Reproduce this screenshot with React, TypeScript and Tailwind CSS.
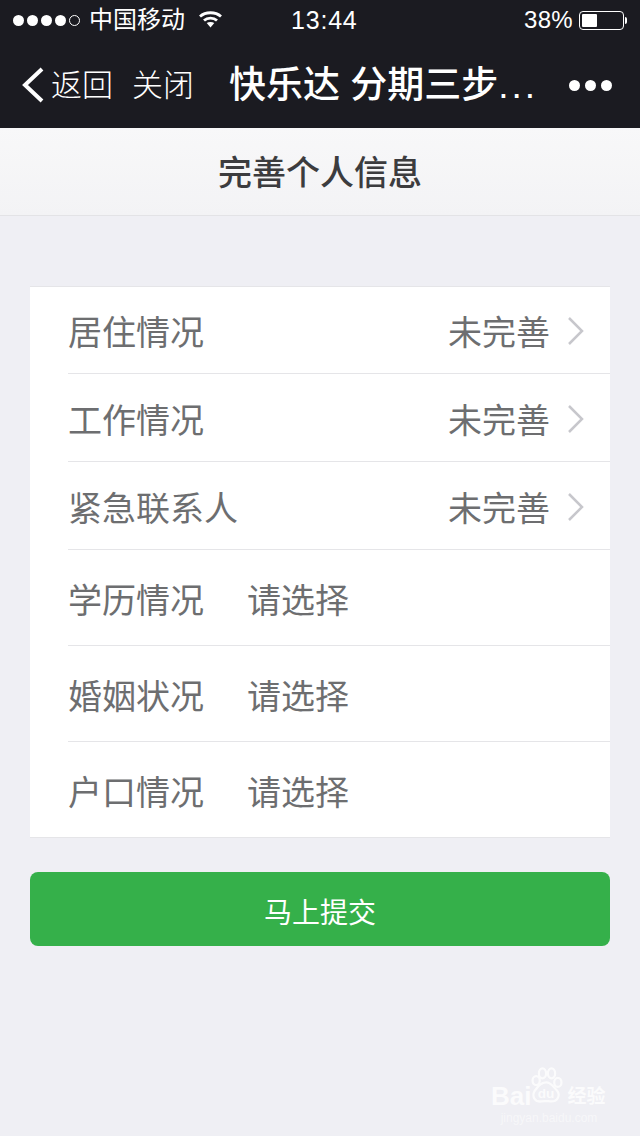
const font = { fontFamily: '"Liberation Sans", "Noto Sans CJK SC", sans-serif' };

const linkRows = ["居住情况", "工作情况", "紧急联系人"];
const selectRows = ["学历情况", "婚姻状况", "户口情况"];

function StatusBar() {
  return (
    <div className="flex h-10 items-center text-white">
      <div className="ml-[13px] flex w-[68px] items-center gap-[3px]">
        {[0, 1, 2, 3].map((i) => (
          <span key={i} className="h-[11px] w-[11px] shrink-0 rounded-full bg-white" />
        ))}
        <span className="h-[11px] w-[11px] shrink-0 rounded-full border border-white" />
      </div>
      <span className="ml-[8px] text-[24px] leading-none">中国移动</span>
      <svg className="ml-[13px] mb-[2px]" width="25" height="18" viewBox="0 0 24 18" fill="none" stroke="#fff" strokeWidth="2.8">
        <path d="M1.5 6.5C7 1.5 17 1.5 22.5 6.5" />
        <path d="M5.5 10.5C9 7.2 15 7.2 18.5 10.5" />
        <path d="M12 17.5l-3.8-4.4c2-1.5 5.6-1.5 7.6 0z" fill="#fff" stroke="none" />
      </svg>
      <span className="ml-[68px] w-[70px] text-[25px] font-medium leading-none tracking-[0.8px]">13:44</span>
      <span className="ml-auto text-[24px] leading-none tracking-[0.3px]">38%</span>
      <div className="ml-[6px] mr-[13px] flex items-center">
        <div className="h-[19px] w-[45px] rounded-[4px] border border-white p-[2px]">
          <div className="h-full w-[15px] rounded-[1px] bg-white" />
        </div>
        <div className="ml-[1px] h-[7px] w-[2px] rounded-r-[2px] bg-white" />
      </div>
    </div>
  );
}

function NavBar() {
  return (
    <div className="flex h-[88px] items-center pt-[2px] text-white">
      <svg className="ml-[21px]" width="24" height="36" viewBox="0 0 24 36" fill="none" stroke="#fff" strokeWidth="4">
        <path d="M21 2L4 18l17 16" />
      </svg>
      <span className="ml-[6px] text-[31px] font-light leading-none">返回</span>
      <span className="ml-[19px] text-[31px] font-light leading-none">关闭</span>
      <span className="ml-[35px] text-[37px] font-medium leading-none">
        快乐达 分期三步<span className="tracking-[3px]">...</span>
      </span>
      <div className="ml-auto mr-[28px] flex gap-[5px]">
        {[0, 1, 2].map((i) => (
          <span key={i} className="h-[11px] w-[11px] rounded-full bg-white" />
        ))}
      </div>
    </div>
  );
}

function Chevron() {
  return (
    <svg className="-mt-[4px] ml-[17px] mr-[25px]" width="18" height="30" viewBox="0 0 18 30" fill="none" stroke="#c7c7cc" strokeWidth="2.5">
      <path d="M2 2l13 13L2 28" />
    </svg>
  );
}

function BaiduMark() {
  return (
    <div className="absolute left-[491px] top-[1065px] w-[116px] whitespace-nowrap text-white opacity-75">
      <svg className="absolute left-[37px] top-[1px]" width="38" height="40" viewBox="0 0 42 42" fill="none" stroke="#fff" strokeWidth="2.5">
        <ellipse cx="9" cy="15" rx="4" ry="5" />
        <ellipse cx="16" cy="7" rx="4" ry="5.5" />
        <ellipse cx="26" cy="7" rx="4" ry="5.5" />
        <ellipse cx="33" cy="17" rx="4" ry="5" />
        <path d="M20 17c6 0 8 5 12 9 4 5 1 12-6 12-4 0-7-1-11 0-7 1-11-5-8-11 3-4 6-10 13-10z" />
        <text x="20" y="34" fontSize="15" fontWeight="700" fill="#fff" stroke="none" textAnchor="middle">du</text>
      </svg>
      <div className="mt-[19px] flex items-end leading-none">
        <span className="text-[26px] font-bold leading-[24px]">Bai</span>
        <span className="ml-[36px] text-[19px] font-bold leading-[22px]">经验</span>
      </div>
      <div className="mt-[4px] text-center text-[12px] leading-none opacity-70">jingyan.baidu.com</div>
    </div>
  );
}

export default function App() {
  return (
    <div className="relative h-[1136px] w-[640px] overflow-hidden bg-[#efeff4]" style={font}>
      <div className="bg-[#1b1b21]">
        <StatusBar />
        <NavBar />
      </div>

      <div className="flex h-[88px] items-center justify-center border-b border-[#e3e3e6] bg-gradient-to-b from-[#f8f8f9] to-[#f3f3f5] pt-[2px]">
        <h1 className="text-[34px] font-medium leading-none text-[#3c3c3e]">完善个人信息</h1>
      </div>

      <div className="mx-[30px] mt-[70px] border-y border-[#e5e5e8] bg-white">
        {linkRows.map((label, i) => (
          <div
            key={label}
            className={`ml-[38px] flex items-center border-b border-[#e5e5e8] pt-[6px] text-[34px] leading-none text-[#6d6e70] ${
              i === 0 ? "h-[87px]" : "h-[88px]"
            }`}
          >
            <span>{label}</span>
            <span className="ml-auto">未完善</span>
            <Chevron />
          </div>
        ))}
        {selectRows.map((label, i) => (
          <div
            key={label}
            className={`ml-[38px] flex items-center pt-[6px] text-[34px] leading-none text-[#6d6e70] ${
              i < selectRows.length - 1 ? "h-[96px] border-b border-[#e5e5e8]" : "h-[95px]"
            }`}
          >
            <span className="w-[179px]">{label}</span>
            <span>请选择</span>
          </div>
        ))}
      </div>

      <button className="mx-[30px] mt-[34px] flex h-[74px] w-[580px] items-center justify-center rounded-[8px] bg-[#35b04a] pt-[9px] text-[28px] leading-none text-white">
        马上提交
      </button>

      <BaiduMark />
    </div>
  );
}
